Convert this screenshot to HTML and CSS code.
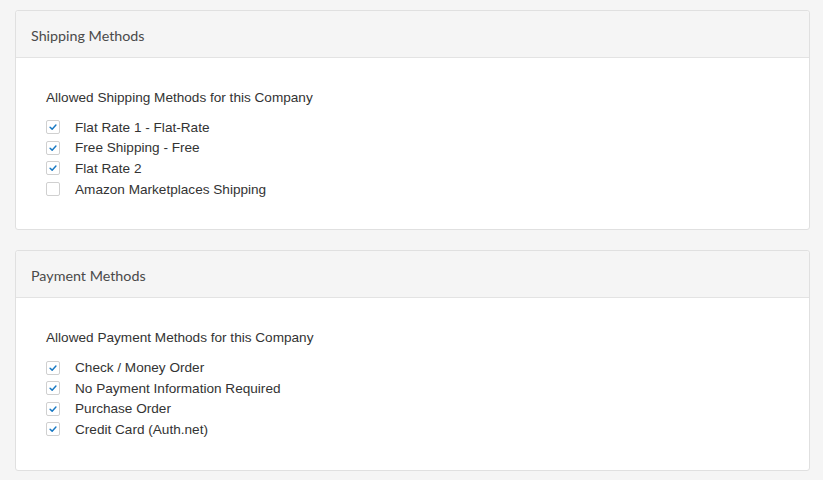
FILE: index.html
```html
<!DOCTYPE html>
<html>
<head>
<meta charset="utf-8">
<link rel="stylesheet" href="styles.css">
</head>
<body>
<section class="card">
  <div class="card-head">Shipping Methods</div>
  <div class="card-body">
    <div class="label">Allowed Shipping Methods for this Company</div>
    <ul class="list">
      <li><span class="cb on"><svg viewBox="0 0 14 14"><path d="M3.6 7.2 L6 9.5 L10.4 4.6"/></svg></span>Flat Rate 1 - Flat-Rate</li>
      <li><span class="cb on"><svg viewBox="0 0 14 14"><path d="M3.6 7.2 L6 9.5 L10.4 4.6"/></svg></span>Free Shipping - Free</li>
      <li><span class="cb on"><svg viewBox="0 0 14 14"><path d="M3.6 7.2 L6 9.5 L10.4 4.6"/></svg></span>Flat Rate 2</li>
      <li><span class="cb"></span>Amazon Marketplaces Shipping</li>
    </ul>
  </div>
</section>
<section class="card">
  <div class="card-head">Payment Methods</div>
  <div class="card-body">
    <div class="label">Allowed Payment Methods for this Company</div>
    <ul class="list">
      <li><span class="cb on"><svg viewBox="0 0 14 14"><path d="M3.6 7.2 L6 9.5 L10.4 4.6"/></svg></span>Check / Money Order</li>
      <li><span class="cb on"><svg viewBox="0 0 14 14"><path d="M3.6 7.2 L6 9.5 L10.4 4.6"/></svg></span>No Payment Information Required</li>
      <li><span class="cb on"><svg viewBox="0 0 14 14"><path d="M3.6 7.2 L6 9.5 L10.4 4.6"/></svg></span>Purchase Order</li>
      <li><span class="cb on"><svg viewBox="0 0 14 14"><path d="M3.6 7.2 L6 9.5 L10.4 4.6"/></svg></span>Credit Card (Auth.net)</li>
    </ul>
  </div>
</section>
</body>
</html>
```
FILE: styles.css
```css
html, body {
  background: #f5f5f5;
}
body {
  margin: 0;
  padding: 10px 13px 0 15px;
  font-family: "Liberation Sans", Arial, sans-serif;
  color: #333;
}
.card {
  background: #fff;
  border: 1px solid #e0e0e0;
  border-radius: 3px;
  margin-bottom: 20px;
}
.card-head {
  background: #f5f5f5;
  border-bottom: 1px solid #e3e3e3;
  height: 47px;
  box-sizing: border-box;
  display: flex;
  align-items: center;
  padding: 3px 0 0 15px;
  font-family: "Lato", "Open Sans", sans-serif;
  font-size: 14.3px;
  color: #4a4a4a;
  border-radius: 3px 3px 0 0;
}
.card-body {
  padding: 32px 30px 30px;
}
.label {
  font-size: 13.6px;
  line-height: 16px;
  color: #333;
  margin-bottom: 11px;
}
.list {
  list-style: none;
  margin: 0;
  padding: 0;
}
.list li {
  display: flex;
  align-items: center;
  height: 20.6px;
  font-size: 13.6px;
  color: #333;
}
.cb {
  width: 14px;
  height: 14px;
  box-sizing: border-box;
  border: 1px solid #d0d0d0;
  border-radius: 2px;
  margin-right: 15px;
  display: flex;
  background: #fff;
}
.cb svg {
  width: 12px;
  height: 12px;
}
.cb path {
  fill: none;
  stroke: #1979c3;
  stroke-width: 1.7;
  stroke-linecap: round;
  stroke-linejoin: round;
}
```
